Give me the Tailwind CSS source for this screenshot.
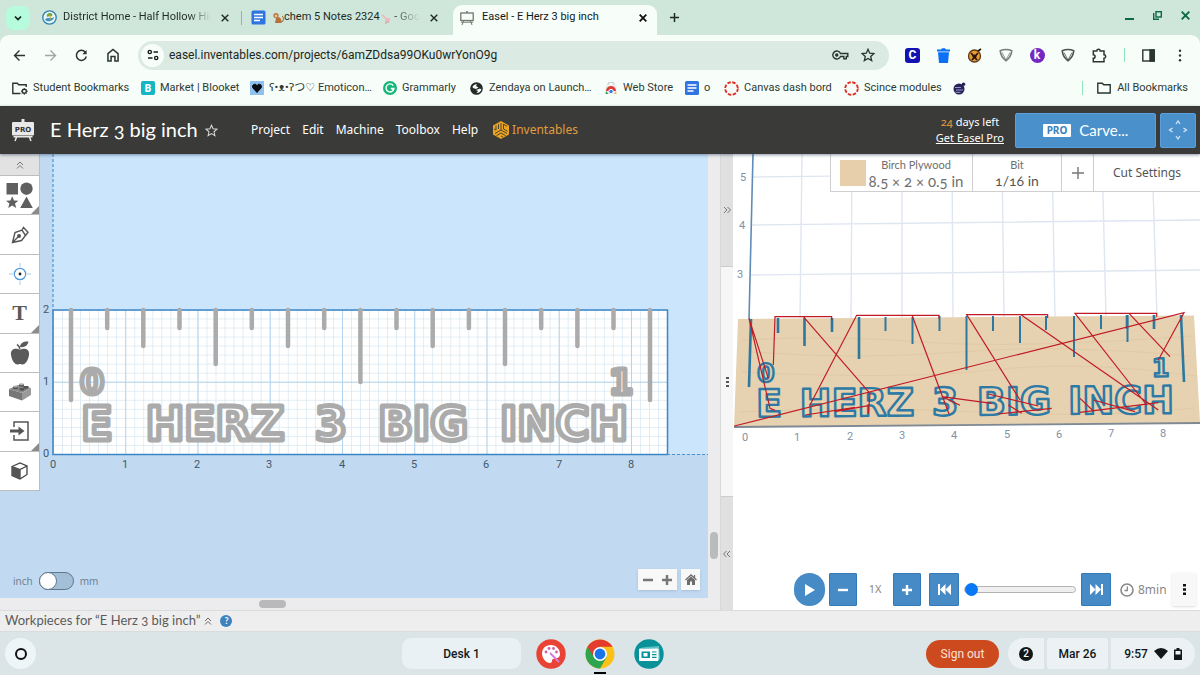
<!DOCTYPE html>
<html lang="en">
<head>
<meta charset="utf-8">
<meta name="viewport" content="width=device-width, initial-scale=1">
<title>Easel - E Herz 3 big inch</title>
<script src="https://cdn.jsdelivr.net/npm/@tailwindcss/browser@4"></script>
</head>
<body class="min-h-screen flex flex-col overflow-x-hidden bg-[#cfe7da] font-['Roboto',sans-serif] text-[#1f2a25]">

<!-- Tab strip -->
<div class="flex h-[35px] shrink-0 items-stretch bg-[#cfe7da] text-[11px]" role="tablist">
  <button aria-label="Search tabs" class="ml-[6px] mt-[6px] flex h-6 w-6 items-center justify-center rounded-lg bg-[#b5fbdc]">
    <svg class="h-2 w-2" viewBox="0 0 8 8" fill="none" stroke="#12201a" stroke-width="1.7"><path d="M1 2.5l3 3 3-3"/></svg>
  </button>
  <div role="tab" class="flex w-[211px] items-center pl-3">
    <svg class="mr-[6px] h-[15px] w-[15px] shrink-0" viewBox="0 0 15 15"><circle cx="7.5" cy="7.5" r="6.7" fill="#e8f5f8" stroke="#2b7fae" stroke-width="1.3"/><path d="M3 9.5c3-3 6 0 9-2.500c0 4-7 6-9 2.500z" fill="#3d92c4"/><path d="M5 7c-1-3 1-4 3-4 2 0 3 1.500 2 3-1 1-3-.5-5 1z" fill="#79a83a"/><path d="M8 5v5" stroke="#d9a12c"/></svg>
    <span class="w-[148px] overflow-hidden whitespace-nowrap bg-linear-to-r from-[#1f2a25] from-85% to-transparent bg-clip-text text-[11px] text-transparent">District Home - Half Hollow Hills</span>
    <button aria-label="Close tab" class="ml-[6px] flex h-4 w-4 items-center justify-center"><svg class="h-2 w-2" viewBox="0 0 8 8" stroke="#1f2a25" stroke-width="1.4"><path d="M.7.7l6.600 6.600M7.300.7L.7 7.300"/></svg></button>
  </div>
  <div class="my-auto h-[14px] w-px bg-[#6fc79e]"></div>
  <div role="tab" class="flex w-[211px] items-center pl-[9px]">
    <svg class="mr-[6px] h-[15px] w-[15px] shrink-0" viewBox="0 0 15 15"><rect x=".5" y=".5" width="14" height="14" rx="1.500" fill="#2f74e0"/><path d="M3 4.500h9M3 7.500h9M3 10.500h6" stroke="#fff" stroke-width="1.500"/></svg>
    <span class="flex w-[150px] items-center overflow-hidden whitespace-nowrap text-[11px]">
      <svg class="h-3 w-3 shrink-0" viewBox="0 0 12 12"><circle cx="4" cy="3.500" r="2.600" fill="#b5713c"/><circle cx="4" cy="4" r="1.400" fill="#e9c39c"/><path d="M4 6c4-2 6 1 5 5H3z" fill="#b5713c"/><path d="M9 10c3 0 3-5 1-6" fill="none" stroke="#8d5427"/></svg>
      <span>chem 5 Notes 2324</span>
      <svg class="h-3 w-3 shrink-0" viewBox="0 0 12 12"><path d="M1 4c2-3 4 0 5 2 3-1 5 1 4 3-2 1-5 0-5-2C4 5 2 4 1 4z" fill="#eeb8bd"/><path d="M6 9v3M8 9v2" stroke="#d88b93"/></svg>
      <span class="bg-linear-to-r from-[#1f2a25] to-transparent bg-clip-text text-transparent">&nbsp;- Goo</span>
    </span>
    <button aria-label="Close tab" class="ml-1 flex h-4 w-4 items-center justify-center"><svg class="h-2 w-2" viewBox="0 0 8 8" stroke="#1f2a25" stroke-width="1.400"><path d="M.7.7l6.600 6.600M7.300.7L.7 7.300"/></svg></button>
  </div>
  <div role="tab" aria-selected="true" class="mt-[5px] flex w-[204px] items-center rounded-t-[9px] bg-[#f7fdf9] pb-[5px] pl-[7px]">
    <svg class="mr-2 h-[14px] w-[14px] shrink-0" viewBox="0 0 14 14" fill="none" stroke="#72776f"><path d="M7 0v2" stroke-width="1.500"/><rect x=".8" y="2" width="12.400" height="7.500" stroke-width="1.300"/><path d="M1 11.200h12M3.500 10l-1.500 4M10.500 10l1.500 4"/></svg>
    <span class="flex-1 truncate text-[11px] text-[#111a16]">Easel - E Herz 3 big inch</span>
    <button aria-label="Close tab" class="mr-[6px] flex h-4 w-4 items-center justify-center"><svg class="h-2 w-2" viewBox="0 0 8 8" stroke="#111" stroke-width="1.800"><path d="M.7.7l6.600 6.600M7.300.7L.7 7.300"/></svg></button>
  </div>
  <button aria-label="New tab" class="ml-[13px]"><svg class="h-[9px] w-[9px]" viewBox="0 0 9 9" stroke="#1f2a25" stroke-width="1.500"><path d="M4.500 0v9M0 4.500h9"/></svg></button>
  <div class="ml-auto flex h-[30px] items-center gap-[19px] pr-[10px]">
    <button aria-label="Minimize"><svg class="h-[9px] w-[9px]" viewBox="0 0 9 9" stroke="#0c6848" stroke-width="2"><path d="M0 8h9"/></svg></button>
    <button aria-label="Restore"><svg class="h-[9px] w-[9px]" viewBox="0 0 9 9" fill="none" stroke="#0c6848" stroke-width="1.400"><rect x="3" y=".7" width="5.300" height="5.300"/><path d="M.7 2v6.300H6"/></svg></button>
    <button aria-label="Close window"><svg class="h-[9px] w-[9px]" viewBox="0 0 9 9" stroke="#0c6848" stroke-width="1.900"><path d="M.7.7l7.600 7.600M8.300.7L.7 8.300"/></svg></button>
  </div>
</div>

<!-- Address row -->
<div class="flex h-10 shrink-0 items-center rounded-t-[9px] bg-[#f7fdf9] pl-[13px] pr-[14px]">
  <div class="flex w-[125px] items-center gap-[18px]">
    <button aria-label="Back"><svg class="h-[13px] w-[13px]" viewBox="0 0 13 13" fill="none" stroke="#2a3630" stroke-width="1.400"><path d="M12 6.500H1.500M6.500 1.500l-5 5 5 5"/></svg></button>
    <button aria-label="Forward"><svg class="h-[13px] w-[13px]" viewBox="0 0 13 13" fill="none" stroke="#9fa8a3" stroke-width="1.400"><path d="M1 6.500h10.500M6.500 1.500l5 5-5 5"/></svg></button>
    <button aria-label="Reload"><svg class="h-[13px] w-[13px]" viewBox="0 0 13 13" fill="none" stroke="#2a3630" stroke-width="1.500"><path d="M11.300 7.500A5 5 0 1 1 10.300 3.200"/><path d="M11.600 1v4.300H7.300z" fill="#2a3630" stroke="none"/></svg></button>
    <button aria-label="Home"><svg class="h-[14px] w-[14px]" viewBox="0 0 13 13" fill="none" stroke="#2a3630" stroke-width="1.400"><path d="M1.800 5.200L6.500 1.400l4.700 3.800v6.900H8.300V8H4.700v4.100H1.800z"/></svg></button>
  </div>
  <div class="flex h-[29px] min-w-0 flex-1 items-center rounded-full bg-[#dbebe3] pl-[3px]">
    <button aria-label="Site information" class="flex h-[23px] w-[23px] shrink-0 items-center justify-center rounded-full bg-[#f7fdf9]"><svg class="h-3 w-3" viewBox="0 0 12 12" fill="none" stroke="#16201b" stroke-width="1.400"><circle cx="2.800" cy="3" r="1.600"/><path d="M6.500 3H11M1 9h4.500"/><circle cx="9.200" cy="9" r="1.600"/></svg></button>
    <input aria-label="Address" value="easel.inventables.com/projects/6amZDdsa99OKu0wrYonO9g" class="ml-[5px] min-w-0 flex-1 bg-transparent text-[12px] text-[#1b2721] outline-none">
    <button aria-label="Passwords" class="mr-3"><svg class="h-[10px] w-[17px]" viewBox="0 0 17 10" fill="none" stroke="#2a3630" stroke-width="1.400"><path d="M8.500 3.500h7.300v3h-1.500v2.200h-2.500V6.500H8.500A4 4 0 1 1 8.500 3.500z"/><circle cx="4.800" cy="5" r="1" fill="#2a3630"/></svg></button>
    <button aria-label="Bookmark this page" class="mr-[14px]"><svg class="h-[14px] w-[14px]" viewBox="0 0 14 14" fill="none" stroke="#2a3630" stroke-width="1.300"><path d="M7 1.300l1.700 3.900 4.200.4-3.200 2.800 1 4.200L7 10.400l-3.700 2.200 1-4.200L1.100 5.600l4.200-.4z"/></svg></button>
  </div>
  <div class="ml-4 flex w-[281px] shrink-0 items-center justify-between">
    <button aria-label="Clever" class="flex h-[15px] w-[15px] items-center justify-center rounded-[3px] bg-[#1512b4] text-[12px] font-bold text-white">C</button>
    <button aria-label="Trash"><svg class="h-[15px] w-[13px]" viewBox="0 0 13 15" fill="#0b70f4"><path d="M0 1.500h4L5 .3h3l1 1.200h4v2H0zM1 4.300h11L11 15H2z"/></svg></button>
    <button aria-label="Fox extension"><svg class="h-[15px] w-[15px]" viewBox="0 0 15 15"><circle cx="7.500" cy="8" r="6" fill="#eb9b33" stroke="#5f3a18" stroke-width="1.300"/><path d="M4 5l6 7M11 5l-6 7M11 3l3-2" stroke="#26170c" stroke-width="1.800"/><circle cx="7.500" cy="8.500" r="2" fill="#26170c"/></svg></button>
    <button aria-label="Shield extension"><svg class="h-[14px] w-[14px]" viewBox="0 0 14 14" fill="none" stroke="#777e7a" stroke-width="1.600" stroke-linejoin="round"><path d="M1.200 2.800q5.800-2.600 11.600 0-.5 6-5.800 10Q1.700 8.800 1.200 2.800z"/><path d="M3 4.500L7 12l4-7.500" stroke-width=".8"/></svg></button>
    <button aria-label="Kami" class="flex h-[15px] w-[15px] items-center justify-center rounded-full bg-[#7428c3] text-[12px] font-bold text-white">k</button>
    <button aria-label="Guard extension"><svg class="h-[14px] w-[14px]" viewBox="0 0 14 14" fill="none" stroke="#4b5450" stroke-width="1.600" stroke-linejoin="round"><path d="M1.200 2.800q5.800-2.600 11.600 0-.5 6-5.800 10Q1.700 8.800 1.200 2.800z"/><path d="M3 4.500L7 12l4-7.500" stroke-width=".8"/></svg></button>
    <button aria-label="Extensions"><svg class="h-[15px] w-[15px]" viewBox="0 0 15 15" fill="none" stroke="#2a3630" stroke-width="1.500"><path d="M1.300 3h3.500a1.700 1.700 0 0 1 3.400 0h3.800v3.800a1.700 1.700 0 0 1 0 3.400V13.700H1.300v-3.400a1.800 1.800 0 0 0 0-3.600z"/></svg></button>
    <div class="h-[14px] w-px bg-[#8fe3bd]"></div>
    <button aria-label="Side panel"><svg class="h-[13px] w-[13px]" viewBox="0 0 13 13" fill="none" stroke="#2a3630" stroke-width="1.400"><rect x=".8" y="1" width="11.400" height="11"/><path d="M8 1h4.200v11H8z" fill="#2a3630"/></svg></button>
    <button aria-label="Menu"><svg class="h-[13px] w-[14px]" viewBox="0 0 14 13" fill="#2a3630"><circle cx="8" cy="1.700" r="1.200"/><circle cx="8" cy="6.500" r="1.200"/><circle cx="8" cy="11.300" r="1.200"/></svg></button>
  </div>
</div>

<!-- Bookmarks -->
<nav aria-label="Bookmarks" class="flex h-[31px] shrink-0 items-center overflow-hidden whitespace-nowrap bg-[#f7fdf9] pb-[5px] pl-3 pr-3 text-[11px] text-[#2d3933]">
  <a href="#" class="flex w-[129px] items-center gap-[5px]"><svg class="h-[13px] w-4 shrink-0" viewBox="0 0 16 13" fill="none" stroke="#2a3630" stroke-width="1.400"><path d="M8.500 11.500H.8V1.200h4.500l1.400 1.600h7.500V5"/><circle cx="12.300" cy="9.300" r="2"/><path d="M12.300 6v1M12.300 11.600v1.200M9 9.300h1M14.600 9.300h1.200M10 7l.8.8M13.800 10.800l.8.8M14.600 7l-.8.8M10.800 10.800l-.8.800" stroke-width="1"/></svg>Student Bookmarks</a>
  <a href="#" class="flex w-[109px] items-center gap-[5px]"><span class="flex h-[14px] w-[14px] shrink-0 items-center justify-center rounded-[2px] bg-[#14b6c5] text-[10px] font-black text-white">B</span>Market | Blooket</a>
  <a href="#" class="flex w-[133px] items-center gap-[5px]"><svg class="h-[14px] w-[14px] shrink-0" viewBox="0 0 14 14"><rect width="14" height="14" fill="#8fc0ee"/><path d="M7 11.500L3 7C1.200 4 5 1.700 7 4.500c2-2.800 5.800-.5 4 2.500z" fill="#0b0d12" stroke="#0b0d12"/></svg><span class="font-['Roboto','DejaVu_Sans','Noto_Sans_CJK_JP',sans-serif]">ʕ•ᴥ•ʔつ♡ Emoticon…</span></a>
  <a href="#" class="flex w-[87px] items-center gap-[5px]"><svg class="h-[14px] w-[14px] shrink-0" viewBox="0 0 14 14"><circle cx="7" cy="7" r="7" fill="#15b67a"/><path d="M10.300 4.600A4 4 0 1 0 11 7.500H7.800M11 7.500l-1.800 1.800" fill="none" stroke="#fff" stroke-width="1.400"/></svg>Grammarly</a>
  <a href="#" class="flex w-[135px] items-center gap-[6px]"><svg class="h-[13px] w-[13px] shrink-0" viewBox="0 0 13 13"><circle cx="6.500" cy="6.500" r="6.300" fill="#222b27"/><path d="M2.500 4.500Q4 2 7 2L6 4l2.500 1.500L6 7 3 6zM6 8l4-1.500 1.500 1Q10 11 6.500 11L8 9z" fill="#f7fdf9"/></svg>Zendaya on Launch…</a>
  <a href="#" class="flex w-20 items-center gap-[6px]"><svg class="h-3 w-3 shrink-0" viewBox="0 0 12 12"><path d="M3 3a3 3 0 0 1 6 0" fill="none" stroke="#ccd2d5" stroke-width="1.400"/><path d="M.5 3.500h11V12H.5z" fill="#e8ebed"/><path d="M1 9a5 5 0 0 1 10 0z" fill="#dd3c30"/><path d="M1 9l2.500 3H.5z" fill="#2c9f52"/><path d="M11 9l-2 3h2.500z" fill="#f4bd2e"/><circle cx="6" cy="9.500" r="2.200" fill="#387be5" stroke="#fff"/></svg>Web Store</a>
  <a href="#" class="flex w-[39px] items-center gap-[5px]"><svg class="h-[14px] w-[14px] shrink-0" viewBox="0 0 14 14"><rect width="14" height="14" rx="1.500" fill="#2f74e0"/><path d="M2.500 4h9M2.500 7h9M2.500 10h6" stroke="#fff" stroke-width="1.500"/></svg>o</a>
  <a href="#" class="flex w-[120px] items-center gap-[5px]"><svg class="h-[15px] w-[15px] shrink-0" viewBox="0 0 15 15" fill="none" stroke="#dc3025" stroke-width="1.900"><circle cx="7.500" cy="7.500" r="6.300" stroke-dasharray="3.450 1.500"/></svg>Canvas dash bord</a>
  <a href="#" class="flex w-[109px] items-center gap-[5px]"><svg class="h-[15px] w-[15px] shrink-0" viewBox="0 0 15 15" fill="none" stroke="#dc3025" stroke-width="1.900"><circle cx="7.500" cy="7.500" r="6.300" stroke-dasharray="3.450 1.500"/></svg>Scince modules</a>
  <a href="#" aria-label="Eclipse" class="flex"><svg class="h-[13px] w-[13px]" viewBox="0 0 13 13"><circle cx="6" cy="7" r="5.500" fill="#26215c"/><circle cx="10.500" cy="2.300" r="1.800" fill="#26215c"/><path d="M2 5.500h6M3 8h7M2.500 10.300h5" stroke="#b8b2dd" stroke-width=".8"/></svg></a>
  <div class="ml-auto h-[14px] w-px bg-[#8fe3bd]"></div>
  <a href="#" class="ml-[14px] flex items-center gap-[6px]"><svg class="h-3 w-[14px]" viewBox="0 0 14 12" fill="none" stroke="#2a3630" stroke-width="1.400"><path d="M.8 1.200h4.500l1.400 1.600h6.500v8.200H.8z"/></svg>All Bookmarks</a>
</nav>

<!-- Easel header -->
<header class="z-20 flex h-12 shrink-0 items-center bg-[#3a3b38] pl-3 pr-1 font-['Noto_Sans',sans-serif] text-[12px] text-white oldstyle-nums shadow-[0_1px_3px_rgba(60,80,110,0.6)]">
  <svg class="h-6 w-[22px] shrink-0" viewBox="0 0 22 24"><path d="M11 1v3" stroke="#e9e9e9" stroke-width="3"/><rect x="0" y="4" width="22" height="13.500" rx="1" fill="#e9e9e9"/><path d="M1.500 18.700h19M5 18l-2 5M17 18l2 5" stroke="#e9e9e9" stroke-width="1.500"/><text x="11" y="13.500" text-anchor="middle" font-family="DejaVu Sans" font-weight="bold" font-size="7" fill="#333">PRO</text></svg>
  <h1 class="ml-4 w-[149px] whitespace-nowrap pb-[2px] font-['Lato',sans-serif] text-[20px] leading-6">E Herz 3 big inch</h1>
  <button aria-label="Favorite" class="ml-[6px]"><svg class="h-[13px] w-[13px]" viewBox="0 0 14 14" fill="none" stroke="#d8d8d8" stroke-width="1.100"><path d="M7 1.300l1.700 3.900 4.200.4-3.200 2.800 1 4.200L7 10.400l-3.700 2.200 1-4.200L1.100 5.600l4.200-.4z"/></svg></button>
  <nav class="ml-[33px] flex items-center gap-3 whitespace-nowrap">
    <button>Project</button><button>Edit</button><button>Machine</button><button>Toolbox</button><button>Help</button>
    <a href="#" class="ml-[3px] flex items-center gap-[3px] text-[#e29c3d]"><svg class="h-[18px] w-4" viewBox="0 0 16 18"><path d="M8 0l8 4.500v9L8 18l-8-4.500v-9z" fill="#eba320"/><path d="M8 9V2M8 9l6 3.500M8 9l-6 3.500M5.500 8V3.200M3 9V4.600M10.500 8V3.200L14 5.300M10.500 8l4 2.300M8 12l4.500 2.600M8 12l-4.500 2.600M8 15l2 1.200M1 8l2 1" fill="none" stroke="#3a3b38" stroke-width=".9"/></svg>Inventables</a>
  </nav>
  <div class="ml-auto mr-[11px] whitespace-nowrap text-center text-[11px] leading-4"><div><span class="text-[#e29c3d]">24</span> days left</div><a href="#" class="underline">Get Easel Pro</a></div>
  <button class="flex h-[35px] w-[141px] items-center justify-center gap-2 rounded-[2px] border border-[#5ba0dc] bg-[#4a90cb] font-['Lato',sans-serif] text-[15px]"><span class="rounded-[1px] bg-white px-1 font-['Noto_Sans',sans-serif] text-[10px] font-bold leading-[13px] text-[#397fbc]">PRO</span>Carve...</button>
  <button aria-label="Jog machine" class="ml-1 flex h-[35px] w-9 items-center justify-center rounded-[2px] border border-[#5ba0dc] bg-[#4a90cb]"><svg class="h-5 w-5" viewBox="0 0 20 20" fill="none" stroke="#d9e9f8" stroke-width="1.200"><path d="M8 4l2-3 2 3M8 16l2 3 2-3M4.500 8l-3 2 3 2M15.500 8l3 2-3 2"/></svg></button>
</header>

<main class="flex min-h-0 flex-1 bg-white">
  <!-- Design side -->
  <section aria-label="Design" class="flex min-w-0 flex-[733] bg-[#ececee]">
    <div class="flex min-w-0 flex-1 flex-col">
      <div class="relative min-h-0 flex-1 bg-[#c1daf1]">
        <svg class="block h-full w-full" viewBox="0 154 708 444" preserveAspectRatio="xMinYMin slice" font-family="Roboto, sans-serif">
          <defs>
            <pattern id="minor" x="53" y="309.500" width="9.030" height="9.030" patternUnits="userSpaceOnUse"><path d="M0 0V9.030M0 0H9.030" stroke="#d6e6f0" stroke-width="1.400" fill="none"/></pattern>
            <pattern id="major" x="53" y="309.500" width="72.250" height="72.250" patternUnits="userSpaceOnUse"><path d="M0 0V72.250M0 0H72.250" stroke="#b4d3ec" stroke-width="2" fill="none"/></pattern>
          </defs>
          <rect x="53" y="154" width="655" height="300" fill="#cbe5fd"/>
          <rect x="53" y="309.500" width="614" height="145" fill="#fff"/>
          <rect x="53" y="309.500" width="614" height="145" fill="url(#minor)"/>
          <rect x="53" y="309.500" width="614" height="145" fill="url(#major)"/>
          <rect x="53" y="310" width="614.500" height="144.500" fill="none" stroke="#3b86c6" stroke-width="1.500"/>
          <path d="M53 154v156M667 454.500h41" fill="none" stroke="#4b93cf" stroke-width="1.200" stroke-dasharray="3 2"/>
          <path d="M71 310V400M143.300 310V346M215.700 310V364M288 310V346M360.400 310V382M432.700 310V346M505 310V364M577.400 310V346M650 310V400M107.200 310V328M179.500 310V328M251.800 310V328M324.200 310V328M396.500 310V328M468.900 310V328M541.200 310V328M613.500 310V328" stroke="#ababab" stroke-width="4.500" stroke-linecap="round"/>
          <g font-family="DejaVu Sans" font-weight="bold" text-anchor="middle" fill="#fff" stroke="#ababab" stroke-width="5" stroke-linejoin="round">
            <g font-size="34"><text x="92" y="394">0</text><text x="621" y="394">1</text></g>
            <g font-size="46"><text x="97" y="440">E</text><text x="215" y="440">HERZ</text><text x="331" y="440">3</text><text x="423" y="440">BIG</text><text x="564" y="440">INCH</text></g>
          </g>
          <g font-size="11" fill="#44576b" text-anchor="middle">
            <text x="46" y="313">2</text><text x="46" y="385">1</text><text x="46" y="457">0</text>
            <text x="53" y="468">0</text><text x="125" y="468">1</text><text x="197" y="468">2</text><text x="269" y="468">3</text><text x="342" y="468">4</text><text x="414" y="468">5</text><text x="486" y="468">6</text><text x="559" y="468">7</text><text x="631" y="468">8</text>
          </g>
        </svg>

        <!-- Tool palette over the canvas -->
        <div class="absolute left-0 top-0 flex h-[337px] w-10 flex-col divide-y divide-[#bdbdbd] border-b border-r border-[#bdbdbd] bg-white">
          <button aria-label="Collapse tools" class="flex h-[22px] shrink-0 items-center justify-center bg-[#e2e2e2]"><svg class="h-2 w-2" viewBox="0 0 8 8" fill="none" stroke="#777"><path d="M1 4l3-3 3 3M1 7.500l3-3 3 3"/></svg></button>
          <button aria-label="Shapes" class="relative flex flex-1 items-center justify-center"><svg class="h-[27px] w-[27px]" viewBox="0 0 27 27" fill="#5f5f5f"><path d="M.5 1h11.500v11.500H.5z"/><circle cx="20.500" cy="6.700" r="6.200"/><path d="M6.200 14.200l1.800 4.200 4.400.3-3.400 2.800 1.200 4.500-4-2.500-4 2.500 1.200-4.500L0 18.700l4.400-.3zM20.500 14.500l6.300 11.500H14.200z"/></svg><i class="absolute bottom-0 right-0 border-b-8 border-l-8 border-b-[#8b8b8b] border-l-transparent"></i></button>
          <button aria-label="Pen" class="flex flex-1 items-center justify-center"><svg class="h-[18px] w-[18px]" viewBox="0 0 18 18" fill="none" stroke="#555" stroke-width="1.400"><path d="M1.500 16.500L4 6.500l7-2.500 3.500 5.500-4 5zM11 4l1.500-2.500 4.500 4.800-2.500 3.200M1.500 16.500l6-6"/><circle cx="8" cy="10" r="1.300" fill="#555"/></svg></button>
          <button aria-label="Drill point" class="flex flex-1 items-center justify-center"><svg class="h-[22px] w-[22px]" viewBox="0 0 22 22" fill="none" stroke="#4c98dc"><path d="M11 0v4M11 18v4M0 11h4M18 11h4" stroke="#a9cdec"/><circle cx="11" cy="11" r="5.700" stroke-width="1.200"/><circle cx="11" cy="11" r="1.400" fill="#222" stroke="none"/></svg></button>
          <button aria-label="Text" class="relative flex flex-1 items-center justify-center font-['Liberation_Serif',serif] text-[22px] font-bold leading-none text-[#5a5a5a]">T<i class="absolute bottom-0 right-0 border-b-8 border-l-8 border-b-[#8b8b8b] border-l-transparent"></i></button>
          <button aria-label="Icons" class="flex flex-1 items-center justify-center"><svg class="h-6 w-5" viewBox="0 0 20 24" fill="#5a5a5a"><path d="M10 9c3-2.500 10-2 9 5-.7 5-3.500 9.500-6.500 9.500-1 0-1.500-.5-2.500-.5s-1.500.5-2.500.5C4.500 23.500 1.700 19 1 14 0 7 7 6.500 10 9z"/><path d="M10 8.500Q9.500 5 7 3.500" fill="none" stroke="#5a5a5a" stroke-width="1.500"/><path d="M10 6c0-4 4-6 8.500-5.500C18 4.500 14 7 10 6z"/></svg></button>
          <button aria-label="Apps" class="flex flex-1 items-center justify-center"><svg class="h-[18px] w-[22px]" viewBox="0 0 22 18"><path d="M0 6l9-4 13 3-9 5z" fill="#8b8b8b"/><path d="M0 6l13 4v7.500L0 13z" fill="#777"/><path d="M13 10l9-5v7l-9 5.500z" fill="#999"/><g fill="#555"><path d="M4 3.500v2c1 1 4 1 5 0v-2zM10 1v2c1 1 4 1 5 0V1zM10.500 5v2c1 1 4 1 5 0V5zM14.500 3v2c1 1 4 1 5 0V3z"/></g><g fill="#b0b0b0"><ellipse cx="6.500" cy="3.500" rx="2.500" ry="1"/><ellipse cx="12.500" cy="1.200" rx="2.500" ry="1"/></g></svg></button>
          <button aria-label="Import" class="relative flex flex-1 items-center justify-center"><svg class="h-5 w-5" viewBox="0 0 20 20" fill="none" stroke="#555" stroke-width="1.500"><path d="M4 6V1h14v18H4v-5"/><path d="M0 10h9" stroke-width="3"/><path d="M8.500 5.500l6 4.500-6 4.500z" fill="#555" stroke="none"/></svg><i class="absolute bottom-0 right-0 border-b-8 border-l-8 border-b-[#8b8b8b] border-l-transparent"></i></button>
          <button aria-label="3D" class="flex flex-1 items-center justify-center"><svg class="h-[18px] w-[17px]" viewBox="0 0 17 18"><path d="M1 4.500L9 1l7 3v8.500L9 17l-8-3.500z" fill="#fff" stroke="#444" stroke-width="1.300"/><path d="M1 4.500l8 3L16 4M9 7.500V17" fill="none" stroke="#444" stroke-width="1.300"/><path d="M1 4.500l8 3V17l-8-3.500z" fill="#555"/></svg></button>
        </div>

        <label class="absolute bottom-2 left-[13px] flex items-center gap-[6px] font-['Noto_Sans',sans-serif] text-[10px] text-[#708294]">inch
          <input type="checkbox" role="switch" aria-label="Use millimetres" class="relative h-[18px] w-[35px] appearance-none rounded-full border border-[#60788c] bg-[#a3bfd8] before:absolute before:-left-px before:-top-px before:h-[18px] before:w-[18px] before:rounded-full before:border before:border-[#60788c] before:bg-white">
          mm</label>
        <div class="absolute bottom-2 right-2 flex gap-1 text-[#777]">
          <div class="flex h-[21px] w-[39px] items-center justify-around bg-[#f8f8f8] shadow-sm">
            <button aria-label="Zoom out"><svg class="h-[10px] w-[10px]" viewBox="0 0 10 10" stroke="#777" stroke-width="2.500"><path d="M0 5h10"/></svg></button>
            <button aria-label="Zoom in"><svg class="h-[10px] w-[10px]" viewBox="0 0 10 10" stroke="#777" stroke-width="2.500"><path d="M0 5h10M5 0v10"/></svg></button>
          </div>
          <button aria-label="Reset view" class="flex h-[21px] w-[19px] items-center justify-center bg-[#f8f8f8] shadow-sm"><svg class="h-[11px] w-3" viewBox="0 0 12 11" fill="#6d6d6d"><path d="M2 6l4-3.500L10 6v5H7V7.500H5V11H2z"/><path d="M.5 6L6 1l5.500 5M9.500 1v3" fill="none" stroke="#6d6d6d" stroke-width="1.300"/></svg></button>
        </div>
      </div>
      <div class="flex h-3 items-center bg-[#ececee] pl-[259px]"><div class="h-2 w-[27px] rounded-full bg-[#b9b9bb]"></div></div>
    </div>
    <div class="flex w-3 flex-col items-center justify-end bg-[#ececee] pb-[51px]"><div class="h-[27px] w-2 rounded-full bg-[#b9bbbd]"></div></div>
    <div class="flex w-[13px] flex-col border-l border-[#d8d8d8] bg-[#e0e0e0] text-[#777]">
      <button aria-label="Expand design" class="flex h-[113px] items-center justify-center border-b border-[#ccc]"><svg class="h-2 w-2" viewBox="0 0 8 8" fill="none" stroke="#777"><path d="M1 1l3 3-3 3M4.500 1l3 3-3 3"/></svg></button>
      <div role="separator" class="flex h-[229px] flex-col items-center justify-center gap-[2px] bg-[#f6f6f6]"><i class="h-[2px] w-[3px] bg-[#555]"></i><i class="h-[2px] w-[3px] bg-[#555]"></i><i class="h-[2px] w-[3px] bg-[#555]"></i></div>
      <button aria-label="Expand preview" class="flex flex-1 items-center justify-center border-t border-[#ccc]"><svg class="h-2 w-2" viewBox="0 0 8 8" fill="none" stroke="#777"><path d="M3.500 1l-3 3 3 3M7 1L4 4l3 3"/></svg></button>
    </div>
  </section>

  <!-- Preview side -->
  <section aria-label="Preview" class="relative min-w-0 flex-[467] bg-white">
    <svg class="absolute inset-0 h-full w-full" viewBox="733 154 467 456" preserveAspectRatio="xMinYMin slice" font-family="Roboto, sans-serif">
      <path d="M802 154L800 318M852 154L851 318M902 154V318M952 154L953 318M1002 154L1004 318M1052 154L1055 318M1102 154L1106 318M1152 154L1157 318M752 177L1200 172M751 225L1200 220M750 275L1200 270" stroke="#dfe6f1" stroke-width="1.400"/>
      <path d="M753 154L749 320" stroke="#5f8cb4" stroke-width="1.600"/>
      <path d="M738 319L1194 315.500 1200 423 734 427z" fill="#e6d1b0"/>
      <path d="M742 340q90-5 180 2t270-6M750 352q110 8 210 0t230 4M740 412q120-6 240 0t215-4M742 372q160 8 250-2t205 6" fill="none" stroke="#dbc29c" stroke-width="1" opacity=".5"/>
      <path d="M734 427L1200 423" stroke="#7f8993" stroke-width="1.800"/>
      <g stroke="#2e789f" stroke-width="2.600"><path d="M751 319L749 387M778 318v15M804.500 318v28M832 318v14M859 317v42M1127 315v14M1154 315v14"/><path d="M885.500 317v14M912.500 317v27M939.500 316v15M966.500 316v54M993 316v15M1020 316v27M1046 316v14M1074 316v41M1101 315v14M1127.500 315v27" stroke-width="2"/><path d="M1181 315L1184 382"/></g>
      <g transform="rotate(-0.500 966 400)" font-family="DejaVu Sans" font-weight="bold" text-anchor="middle" fill="#e6d1b0" stroke="#2c7aa5" stroke-width="2.400" stroke-linejoin="round">
        <g font-size="25"><text x="766" y="380">0</text><text x="1161" y="378">1</text></g>
        <g font-size="38"><text x="769" y="415">E</text><text x="857" y="415">HERZ</text><text x="945" y="415">3</text><text x="1014" y="415">BIG</text><text x="1121" y="415">INCH</text></g>
      </g>
      <path transform="translate(725 290) scale(.33333)" d="M28 408L1377 68 1300 210M72 85L135 355l15 6M72 85l58 180M320 90V80H150L145 225M235 80L435 310l-5 60M642 86V76H395L255 345M562 78L672 372M968 84V74H725L885 330M888 74L1300 360M1295 80V70H1050L1265 345M1212 70L1335 200M650 320L800 340M655 322l50 24M790 312L940 348M820 372L980 355M850 345l40 25M1065 367L1300 338M1105 330L1230 365M1065 325l40 38M240 375L390 352M330 365l100-18" fill="none" stroke="#c11b25" stroke-width="3.600"/>
      <g font-size="11" fill="#8191a3" text-anchor="middle">
        <text x="743" y="181">5</text><text x="742" y="229">4</text><text x="740" y="278">3</text>
        <text x="745" y="441">0</text><text x="797" y="441">1</text><text x="850" y="440">2</text><text x="902" y="439">3</text><text x="954" y="439">4</text><text x="1007" y="438">5</text><text x="1059" y="438">6</text><text x="1111" y="437">7</text><text x="1163" y="437">8</text>
      </g>
    </svg>

    <div class="absolute right-0 top-0 flex h-[38px] border-b border-l border-[#cfcfcf] bg-white font-['Lato',sans-serif] text-[#6f6f6f] oldstyle-nums">
      <button class="flex w-[142px] items-center gap-[2px] border-r border-[#cfcfcf] pl-[9px] pr-2"><span class="h-[26px] w-[26px] shrink-0 bg-[#e8cfac]"></span><span class="flex-1 whitespace-nowrap text-center"><span class="block text-[11px] leading-4">Birch Plywood</span><span class="block text-[15px] leading-4">8.5 × 2 × 0.5 in</span></span></button>
      <button class="w-[89px] border-r border-[#cfcfcf] text-center"><span class="block text-[11px] leading-4">Bit</span><span class="block text-[14px] leading-4 text-[#555]">1/16 in</span></button>
      <button aria-label="Add bit" class="flex w-8 items-center justify-center border-r border-[#cfcfcf]"><svg class="h-3 w-3" viewBox="0 0 12 12" stroke="#777" stroke-width="1.400"><path d="M6 0v12M0 6h12"/></svg></button>
      <button class="w-[106px] font-['Noto_Sans',sans-serif] text-[12px] text-[#555]">Cut Settings</button>
    </div>

    <div class="absolute bottom-1 right-1 flex h-[33px] items-stretch font-['Noto_Sans',sans-serif] text-[#888]">
      <button aria-label="Play" class="flex h-[33px] w-[31px] items-center justify-center self-center rounded-full bg-[#468bc6]"><svg class="h-3 w-[10px]" viewBox="0 0 10 12" fill="#fff"><path d="M0 0l10 6-10 6z"/></svg></button>
      <button aria-label="Slower" class="ml-1 flex w-7 items-center justify-center rounded-[1px] border border-[#347ab8] bg-[#468bc6]"><svg class="h-[10px] w-[10px]" viewBox="0 0 10 10" stroke="#fff" stroke-width="2.400"><path d="M0 5h10"/></svg></button>
      <span class="w-9 self-center text-center text-[11px]">1X</span>
      <button aria-label="Faster" class="flex w-7 items-center justify-center rounded-[1px] border border-[#347ab8] bg-[#468bc6]"><svg class="h-[10px] w-[10px]" viewBox="0 0 10 10" stroke="#fff" stroke-width="2.400"><path d="M0 5h10M5 0v10"/></svg></button>
      <button aria-label="To start" class="ml-2 flex w-[30px] items-center justify-center rounded-[1px] border border-[#347ab8] bg-[#468bc6]"><svg class="h-[11px] w-[13px]" viewBox="0 0 13 11" fill="#fff"><path d="M0 0h2v11H0zM7.500 0v11l-5.500-5.500zM13 0v11L7.500 5.500z"/></svg></button>
      <input type="range" aria-label="Simulation progress" value="0" min="0" max="100" class="ml-[5px] mr-[5px] h-[7px] w-28 appearance-none self-center rounded-full border border-[#b3b3b3] bg-[#efefef] [&::-webkit-slider-thumb]:h-[13px] [&::-webkit-slider-thumb]:w-[13px] [&::-webkit-slider-thumb]:appearance-none [&::-webkit-slider-thumb]:rounded-full [&::-webkit-slider-thumb]:bg-[#0a78f5]">
      <button aria-label="To end" class="flex w-[30px] items-center justify-center rounded-[1px] border border-[#347ab8] bg-[#468bc6]"><svg class="h-[11px] w-[13px]" viewBox="0 0 13 11" fill="#fff"><path d="M11 0h2v11h-2zM5.500 0v11L11 5.500zM0 0v11l5.500-5.500z"/></svg></button>
      <svg class="ml-[9px] h-[14px] w-[14px] self-center" viewBox="0 0 14 14" fill="none" stroke="#888" stroke-width="1.600"><circle cx="7" cy="7" r="6"/><path d="M7.300 3.500v4H4.500" stroke-width="1.300"/></svg>
      <span class="w-[38px] self-center whitespace-nowrap pl-1 text-[12px]">8min</span>
      <button aria-label="More options" class="flex w-6 items-center justify-center bg-[#f8f8f8] shadow-sm"><svg class="h-[11px] w-[3px]" viewBox="0 0 3 11" fill="#111"><path d="M0 0h3v2.600H0zM0 4.200h3v2.600H0zM0 8.400h3V11H0z"/></svg></button>
    </div>
  </section>
</main>

<div class="flex h-[22px] shrink-0 items-center border-b border-t border-[#d8dcdc] bg-[#eeeeee] pl-[5px] font-['Lato',sans-serif] text-[13px] text-[#5b5b5b] oldstyle-nums">
  <button class="flex items-center gap-1">Workpieces for “E Herz 3 big inch”<svg class="h-2 w-2" viewBox="0 0 8 8" fill="none" stroke="#666"><path d="M1 4l3-3 3 3M1 7.500l3-3 3 3"/></svg></button>
  <button aria-label="Help" class="ml-2 flex h-3 w-3 items-center justify-center rounded-full bg-[#3c82bf] text-[9px] font-bold text-white">?</button>
</div>

<!-- ChromeOS shelf -->
<footer class="relative flex h-[43px] shrink-0 items-center bg-[#dbe4e6] px-[5px] text-[12px] text-[#12171a]">
  <button aria-label="Launcher" class="flex h-[31px] w-[31px] items-center justify-center rounded-full bg-[#eef5f6]"><span class="h-3 w-3 rounded-full border-2 border-[#111]"></span></button>
  <div class="absolute left-1/3 ml-[2px] flex items-center gap-[15px]">
    <button class="h-[31px] w-[119px] rounded-[9px] bg-[#e9f1f5] font-medium">Desk 1</button>
    <button aria-label="Canvas drawing"><svg class="h-[30px] w-[30px]" viewBox="0 0 30 30"><circle cx="15" cy="15" r="14.700" fill="#e84335"/><path d="M15 6c-6 0-9 4-9 8.500S10 24 14 24c3 0 1-3 3-4s7 0 7-5-4-9-9-9z" fill="#fff"/><g fill="#d95ca5"><circle cx="10" cy="13" r="1.400"/><circle cx="13" cy="9.500" r="1.400"/><circle cx="17.500" cy="9.500" r="1.400"/><circle cx="20.500" cy="13" r="1.400"/></g><path d="M14 14l9 9" stroke="#d67bd8" stroke-width="2"/></svg></button>
    <button aria-label="Chrome" class="relative ml-1"><svg class="h-[30px] w-[30px]" viewBox="0 0 30 30"><circle cx="15" cy="15" r="14.500" fill="#fbc116"/><path d="M15 15L2.450 7.750A14.500 14.500 0 0 0 15 29.500l7-12z" fill="#2da44e"/><path d="M2.450 7.750A14.500 14.500 0 0 1 27.550 7.750H15L9 18.300z" fill="#e33b2e"/><circle cx="15" cy="15" r="7" fill="#fff"/><circle cx="15" cy="15" r="5.400" fill="#1a73e8"/></svg><i class="absolute -bottom-[5px] left-[9px] h-[2px] w-3 bg-black"></i></button>
    <button aria-label="Screencast" class="ml-1"><svg class="h-[30px] w-[30px]" viewBox="0 0 30 30"><circle cx="15" cy="15" r="14.700" fill="#089198"/><path d="M6 8.500l19-1.500 1 13-2 .5V10z" fill="#5cc2c4"/><rect x="5" y="9.500" width="19.500" height="12.500" rx="1" fill="#fff"/><path d="M7.500 12.500h8.500v6.500H7.500z" fill="#089198"/><path d="M9.500 14h4v3.500h-4z" fill="#fff"/><path d="M18 13h4.500M18 15.700h4.500M18 18.400h4.500" stroke="#089198" stroke-width="1.200"/></svg></button>
  </div>
  <div class="ml-auto flex items-center gap-[3px] font-medium">
    <button class="mr-[6px] h-7 w-[73px] rounded-full bg-[#cd4a1f] font-normal text-[#fbe3d6]">Sign out</button>
    <button aria-label="2 notifications" class="flex h-[31px] w-9 items-center justify-center rounded-l-full rounded-r-[3px] bg-[#ecf2f4]"><span class="flex h-[14px] w-[14px] items-center justify-center rounded-full bg-[#12171a] text-[10px] text-white">2</span></button>
    <button class="h-[31px] w-[61px] rounded-[3px] bg-[#ecf2f4]">Mar 26</button>
    <button class="flex h-[31px] w-[84px] items-center justify-center gap-[6px] rounded-l-[3px] rounded-r-full bg-[#ecf2f4]">9:57<svg class="h-[11px] w-[14px]" viewBox="0 0 14 11" fill="#12171a"><path d="M0 3q7-6 14 0l-7 8z"/></svg><svg class="h-3 w-2" viewBox="0 0 8 12"><path d="M2.500 0h3v1.500H8V12H0V1.500h2.500z" fill="#12171a"/><path d="M1.500 3h5v3.500h-5z" fill="#ecf2f4"/></svg></button>
  </div>
</footer>
</body>
</html>
